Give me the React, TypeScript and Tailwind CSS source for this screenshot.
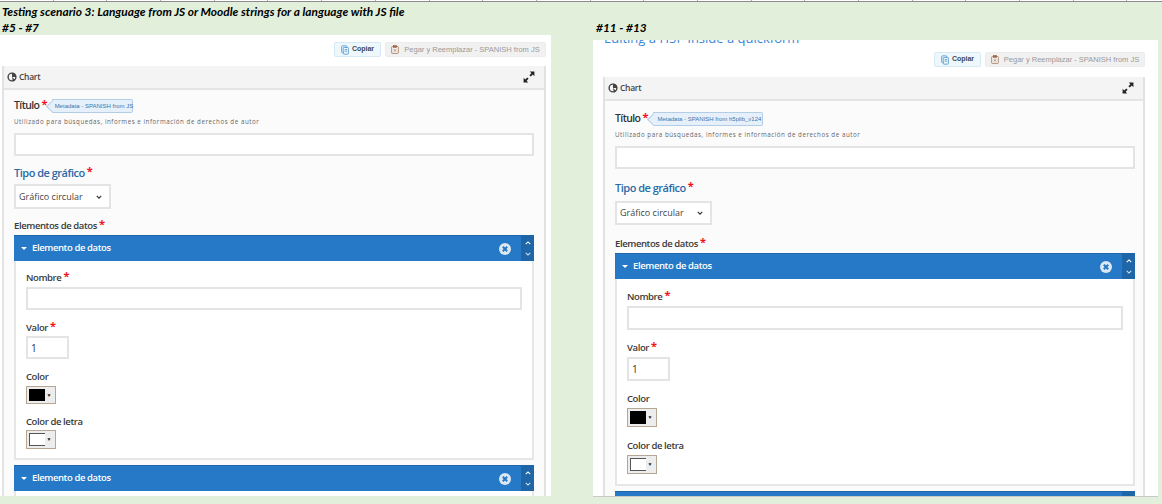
const open = "font-['Open_Sans','Noto_Sans',sans-serif]";

function CopyIcon({ className }: { className: string }) {
  return (
    <svg viewBox="0 0 10 12" className={className} fill="none" stroke="currentColor" strokeWidth="1">
      <rect x="0.8" y="0.8" width="6.4" height="8.4" rx="1" />
      <rect x="2.8" y="2.8" width="6.4" height="8.4" rx="1" fill="#eef7fc" />
      <path d="M4.5 5.5h3M4.5 7.5h3" />
    </svg>
  );
}

function PasteIcon({ className }: { className: string }) {
  return (
    <svg viewBox="0 0 10 11" className={className} fill="none" stroke="currentColor" strokeWidth="0.9">
      <rect x="0.8" y="1.8" width="8.4" height="8.6" rx="0.8" />
      <rect x="3" y="0.6" width="4" height="2.2" fill="currentColor" />
      <path d="M3.7 5.2l2.6 2.8M6.3 5.2L3.7 8" />
    </svg>
  );
}

function ChartIcon() {
  return (
    <svg viewBox="0 0 10 10" className="h-[10px] w-[10px] text-[#444]" fill="none">
      <circle cx="5" cy="5" r="3.9" stroke="currentColor" strokeWidth="1.4" />
      <path d="M5 5V0.8A4.2 4.2 0 0 1 9.2 5z" fill="currentColor" />
      <path d="M5 5l3.4 3-2.4 1.8z" fill="currentColor" />
    </svg>
  );
}

function ExpandIcon() {
  return (
    <svg viewBox="0 0 12 12" className="h-[12px] w-[12px] text-[#222]" fill="currentColor">
      <path d="M6.8 0.6H11.4V5.2L9.8 3.6 7.8 5.6 6.4 4.2 8.4 2.2z" />
      <path d="M5.2 11.4H0.6V6.8L2.2 8.4 4.2 6.4 5.6 7.8 3.6 9.8z" />
    </svg>
  );
}

function Req() {
  return <span className="relative top-[-2px] ml-[2px] text-[11px] leading-[10px] font-bold text-[#f0141c]">*</span>;
}

function Label({ text, required, className }: { text: string; required?: boolean; className: string }) {
  return (
    <div className={`flex h-4 items-center leading-4 ${className}`}>
      {text}
      {required ? <Req /> : null}
    </div>
  );
}

const fieldLabel = "pt-[1px] text-[9.5px] font-semibold tracking-[-0.4px] text-[#3a3a3a]";
const sectionLabel = "text-[11px] font-semibold tracking-[-0.5px] text-[#2b6aa8]";

function TextBox({ className, value }: { className: string; value?: string }) {
  return (
    <input
      readOnly
      value={value ?? ""}
      className={`block border-2 border-[#e4e4e4] bg-white px-[3px] text-[10px] text-[#333] outline-none ${className}`}
    />
  );
}

function Picker({ light, className }: { light?: boolean; className: string }) {
  return (
    <div className={`flex w-[30px] items-center border border-[#b8a695] bg-[#ededed] p-[2px] ${className}`}>
      {light ? (
        <div className="h-full w-[16px] border border-r-0 border-[#555] bg-white" />
      ) : (
        <div className="h-full w-[16px] bg-black" />
      )}
      <span className="flex-1 text-center text-[5px] leading-none text-[#222]">▼</span>
    </div>
  );
}

function ItemBar({ className }: { className: string }) {
  return (
    <div className={`flex h-[26px] shrink-0 items-stretch border-t border-[#1f66a8] bg-[#2579c6] text-white ${className}`}>
      <div className="flex flex-1 items-center pl-[7px]">
        <span className="mr-[5px] h-0 w-0 border-x-[3px] border-t-[3px] border-x-transparent border-t-white" />
        <span className="text-[9.5px] font-semibold tracking-[-0.4px]">Elemento de datos</span>
      </div>
      <svg viewBox="0 0 12 12" className="mr-[10px] h-[12px] w-[12px] self-center">
        <circle cx="6" cy="6" r="6" fill="#dbe7f3" />
        <path d="M3.8 3.8l4.4 4.4M8.2 3.8L3.8 8.2" stroke="#2579c6" strokeWidth="2" />
      </svg>
      <div className="flex w-[13px] flex-col items-center justify-between bg-[#1f66a8] py-[5px]">
        <svg viewBox="0 0 8 5" className="h-[4px] w-[6px]" fill="none" stroke="#fff" strokeWidth="1.4">
          <path d="M1 4l3-3 3 3" />
        </svg>
        <svg viewBox="0 0 8 5" className="h-[4px] w-[6px]" fill="none" stroke="#cfe0f0" strokeWidth="1.4">
          <path d="M1 1l3 3 3-3" />
        </svg>
      </div>
    </div>
  );
}

function Toolbar({ className, pasteWidth }: { className: string; pasteWidth: string }) {
  return (
    <div className={`flex justify-end gap-1 font-['Liberation_Sans',sans-serif] ${className}`}>
      <div className="flex h-[15px] w-[47px] items-center justify-center gap-[3px] rounded-[2px] border border-[#d6eaf6] bg-[#eef7fc] text-[7px] font-bold text-[#3d4a55]">
        <CopyIcon className="h-[10px] w-[8px] text-[#4a90c8]" />
        Copiar
      </div>
      <div className={`flex h-[15px] items-center justify-center gap-[5px] whitespace-nowrap rounded-[2px] border border-[#ececec] bg-[#f1f1f1] text-[7.5px] text-[#9a9a9a] ${pasteWidth}`}>
        <PasteIcon className="h-[9px] w-[8px] text-[#a06a50]" />
        Pegar y Reemplazar - SPANISH from JS
      </div>
    </div>
  );
}

function ChartHeader({ className }: { className: string }) {
  return (
    <div className={`flex items-center justify-between border-b-2 border-[#e4e4e4] bg-[#f4f4f4] pl-[3px] pr-[9px] ${className}`}>
      <div className="flex items-center gap-[2px] text-[8.5px] font-semibold tracking-[-0.3px] text-[#444]">
        <ChartIcon />
        Chart
      </div>
      <ExpandIcon />
    </div>
  );
}

function Badge({ text, className }: { text: string; className: string }) {
  return (
    <span className={`relative ml-[5px] flex h-[14px] items-center justify-center whitespace-nowrap rounded-r-[2px] border border-l-0 border-[#b3cde6] bg-[#e6f0fa] pl-[3px] font-['Liberation_Sans',sans-serif] text-[6px] text-[#3b74ad] ${className}`}>
      <span className="absolute left-[-4px] top-[2px] h-[9px] w-[9px] rotate-45 border-b border-l border-[#b3cde6] bg-[#e6f0fa]" />
      <span className="relative">{text}</span>
    </span>
  );
}

function Hint() {
  return (
    <p className="mt-1 h-[10px] whitespace-nowrap text-[6.2px] leading-[10px] tracking-[0.55px] text-[#666]">
      Utilizado para búsquedas, informes e información de derechos de autor
    </p>
  );
}

function ChartSelect({ className }: { className: string }) {
  return (
    <div className={`flex w-[97px] items-center justify-between border-2 border-[#e4e4e4] bg-white pl-[3px] pr-[7px] text-[9px] text-[#444] ${className}`}>
      Gráfico circular
      <svg viewBox="0 0 8 5" className="h-[4px] w-[6px]" fill="none" stroke="#333" strokeWidth="1.5">
        <path d="M1 1l3 3 3-3" />
      </svg>
    </div>
  );
}

function LeftPanel() {
  return (
    <div className={`h-[461px] w-[551px] shrink-0 overflow-hidden bg-white pt-[7px] ${open}`}>
      <Toolbar className="pr-[5px]" pasteWidth="w-[161px]" />
      <div className="ml-[2px] mt-[9px] h-[500px] w-[544px] border-x-2 border-[#e2e2e2] bg-[#fbfbfb]">
        <ChartHeader className="h-[24px]" />
        <div className="px-[10px] pt-[9px]">
          <div className="flex h-[14px] items-center">
            <span className="text-[10.5px] font-semibold tracking-[-0.6px] text-[#333]">Título</span>
            <Req />
            <Badge text="Metadata - SPANISH from JS" className="w-[81px]" />
          </div>
          <Hint />
          <TextBox className="mt-[6px] h-[23px] w-full" />
          <Label text="Tipo de gráfico" required className={`mt-[9px] ${sectionLabel}`} />
          <ChartSelect className="mt-[3px] h-[25px]" />
          <Label text="Elementos de datos" required className={`mt-2 ${fieldLabel}`} />
          <ItemBar className="mt-[2px]" />
          <div className="h-[199px] border-2 border-t-0 border-[#e6e6e6] bg-white px-[10px] pt-[8px]">
            <Label text="Nombre" required className={fieldLabel} />
            <TextBox className="mt-[2px] h-[23px] w-full" />
            <Label text="Valor" required className={`mt-[9px] ${fieldLabel}`} />
            <TextBox className="mt-[1px] h-[23px] w-[43px]" value="1" />
            <Label text="Color" className={`mt-[9px] ${fieldLabel}`} />
            <Picker className="mt-[2px] h-[18px]" />
            <Label text="Color de letra" className={`mt-[9px] ${fieldLabel}`} />
            <Picker light className="mt-[1px] h-[19px]" />
          </div>
          <ItemBar className="mt-[5px]" />
          <div className="h-[30px] border-x-2 border-[#e6e6e6] bg-white" />
        </div>
      </div>
    </div>
  );
}

function RightPanel() {
  return (
    <div className={`h-[457px] w-[565px] shrink-0 overflow-hidden border-b border-[#c9c9c9] bg-white ${open}`}>
      <h2 className="-mt-[12px] h-[20px] pl-[11px] text-[13px] leading-5 text-[#3a86d4]">Editing a H5P inside a quickform</h2>
      <Toolbar className="mt-1 pr-[13px]" pasteWidth="w-[160px]" />
      <div className="ml-[10px] mt-[10px] h-[500px] w-[542px] border-x-2 border-[#e2e2e2] bg-[#fbfbfb]">
        <ChartHeader className="h-[24px]" />
        <div className="pl-[10px] pr-[8px] pt-[11px]">
          <div className="flex h-[14px] items-center">
            <span className="text-[10.5px] font-semibold tracking-[-0.6px] text-[#333]">Título</span>
            <Req />
            <Badge text="Metadata - SPANISH from h5plib_v124" className="w-[110px]" />
          </div>
          <Hint />
          <TextBox className="mt-[6px] h-[23px] w-full" />
          <Label text="Tipo de gráfico" required className={`mt-[11px] ${sectionLabel}`} />
          <ChartSelect className="mt-[5px] h-[24px]" />
          <Label text="Elementos de datos" required className={`mt-[10px] ${fieldLabel}`} />
          <ItemBar className="mt-[2px]" />
          <div className="h-[207px] border-2 border-t-0 border-[#e6e6e6] bg-white px-[10px] pt-[9px]">
            <Label text="Nombre" required className={fieldLabel} />
            <TextBox className="mt-[2px] h-[24px] w-full" />
            <Label text="Valor" required className={`mt-[9px] ${fieldLabel}`} />
            <TextBox className="mt-[2px] h-[24px] w-[43px]" value="1" />
            <Label text="Color" className={`mt-[9px] ${fieldLabel}`} />
            <Picker className="mt-[2px] h-[19px]" />
            <Label text="Color de letra" className={`mt-[10px] ${fieldLabel}`} />
            <Picker light className="mt-[2px] h-[19px]" />
          </div>
          <ItemBar className="mt-[5px]" />
        </div>
      </div>
    </div>
  );
}

export default function App() {
  const cells = Array.from({ length: 22 }, (_, i) => i);
  const note = "font-['Lato',sans-serif] text-[11.9px] leading-[15px] font-bold italic text-black";
  return (
    <div className="h-[504px] w-[1162px] overflow-hidden bg-[#e2efda]">
      <div className="flex h-[2px] border-b border-[#8c8c8c] bg-white">
        {cells.map((c) => (
          <div key={c} className="h-full w-[53.7px] shrink-0 border-r border-[#aaa]" />
        ))}
      </div>
      <div className={`h-[18px] pl-[2px] pt-[2px] ${note}`}>
        Testing scenario 3: Language from JS or Moodle strings for a language with JS file
      </div>
      <div className="flex">
        <div className="w-[551px] shrink-0">
          <div className={`h-[15px] pl-[2px] ${note}`}>#5 - #7</div>
          <LeftPanel />
        </div>
        <div className="ml-[42px] w-[565px] shrink-0">
          <div className={`h-[20px] pl-[3px] ${note}`}>#11 - #13</div>
          <RightPanel />
        </div>
      </div>
    </div>
  );
}
